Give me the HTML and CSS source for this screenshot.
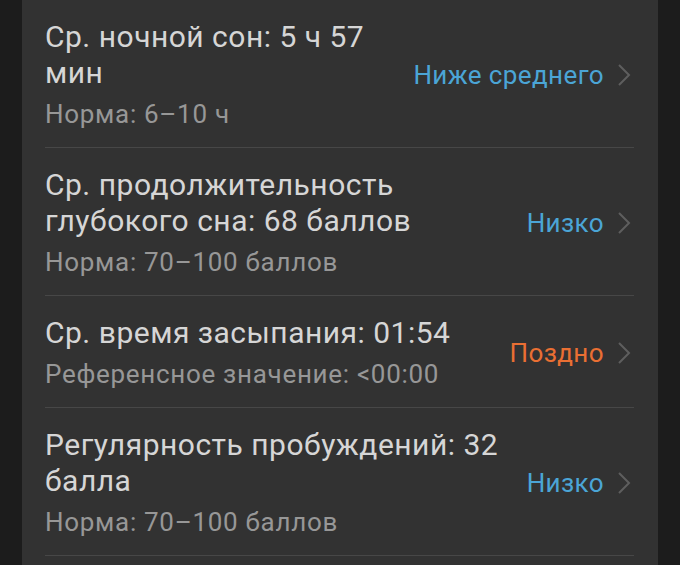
FILE: index.html
```html
<!DOCTYPE html>
<html lang="ru">
<head>
    <meta charset="UTF-8">
    <meta name="viewport" content="width=device-width, initial-scale=1.0">
    <title>Анализ сна</title>
    <link rel="stylesheet" href="styles.css">
</head>
<body>
    <div class="card">
        <div class="row">
            <div class="info">
                <div class="title">Ср. ночной сон: 5 ч 57 мин</div>
                <div class="norm">Норма: 6–10 ч</div>
            </div>
            <div class="status blue">Ниже среднего</div>
            <svg class="chevron" viewBox="0 0 14 22"><polyline points="2,1 12,11 2,21"/></svg>
        </div>
        <div class="row">
            <div class="info">
                <div class="title">Ср. продолжительность глубокого сна: 68 баллов</div>
                <div class="norm">Норма: 70–100 баллов</div>
            </div>
            <div class="status blue">Низко</div>
            <svg class="chevron" viewBox="0 0 14 22"><polyline points="2,1 12,11 2,21"/></svg>
        </div>
        <div class="row">
            <div class="info">
                <div class="title">Ср. время засыпания: 01:54</div>
                <div class="norm">Референсное значение: &lt;00:00</div>
            </div>
            <div class="status orange">Поздно</div>
            <svg class="chevron" viewBox="0 0 14 22"><polyline points="2,1 12,11 2,21"/></svg>
        </div>
        <div class="row">
            <div class="info">
                <div class="title">Регулярность пробуждений: 32 балла</div>
                <div class="norm">Норма: 70–100 баллов</div>
            </div>
            <div class="status blue">Низко</div>
            <svg class="chevron" viewBox="0 0 14 22"><polyline points="2,1 12,11 2,21"/></svg>
        </div>
    </div>
</body>
</html>
```
FILE: styles.css
```css
body {
    margin: 0;
    background-color: #1c1c1c;
    font-family: Roboto, "Noto Sans", sans-serif;
    overflow: hidden;
}
.card {
    margin: 0 22px;
    min-height: 100vh;
    background-color: #323232;
}
.row {
    display: flex;
    align-items: center;
    margin: 0 24px 0 23px;
    padding: 19px 3px 17px 0;
    border-bottom: 1px solid #474747;
}
.info {
    flex: 1;
    min-width: 0;
}
.title {
    color: #d6d6d6;
    font-size: 30px;
    line-height: 36px;
    letter-spacing: 0.5px;
}
.norm {
    margin-top: 7px;
    color: #979797;
    font-size: 26px;
    line-height: 32px;
    letter-spacing: 0.7px;
}
.status {
    flex-shrink: 0;
    margin-left: 16px;
    font-size: 26px;
    line-height: 32px;
    letter-spacing: 0.4px;
}
.blue {
    color: #4ba5d6;
}
.orange {
    color: #ea6f33;
}
.chevron {
    flex-shrink: 0;
    width: 14px;
    height: 22px;
    margin-left: 13px;
}
.chevron polyline {
    fill: none;
    stroke: #5e5e5e;
    stroke-width: 2;
}
```
